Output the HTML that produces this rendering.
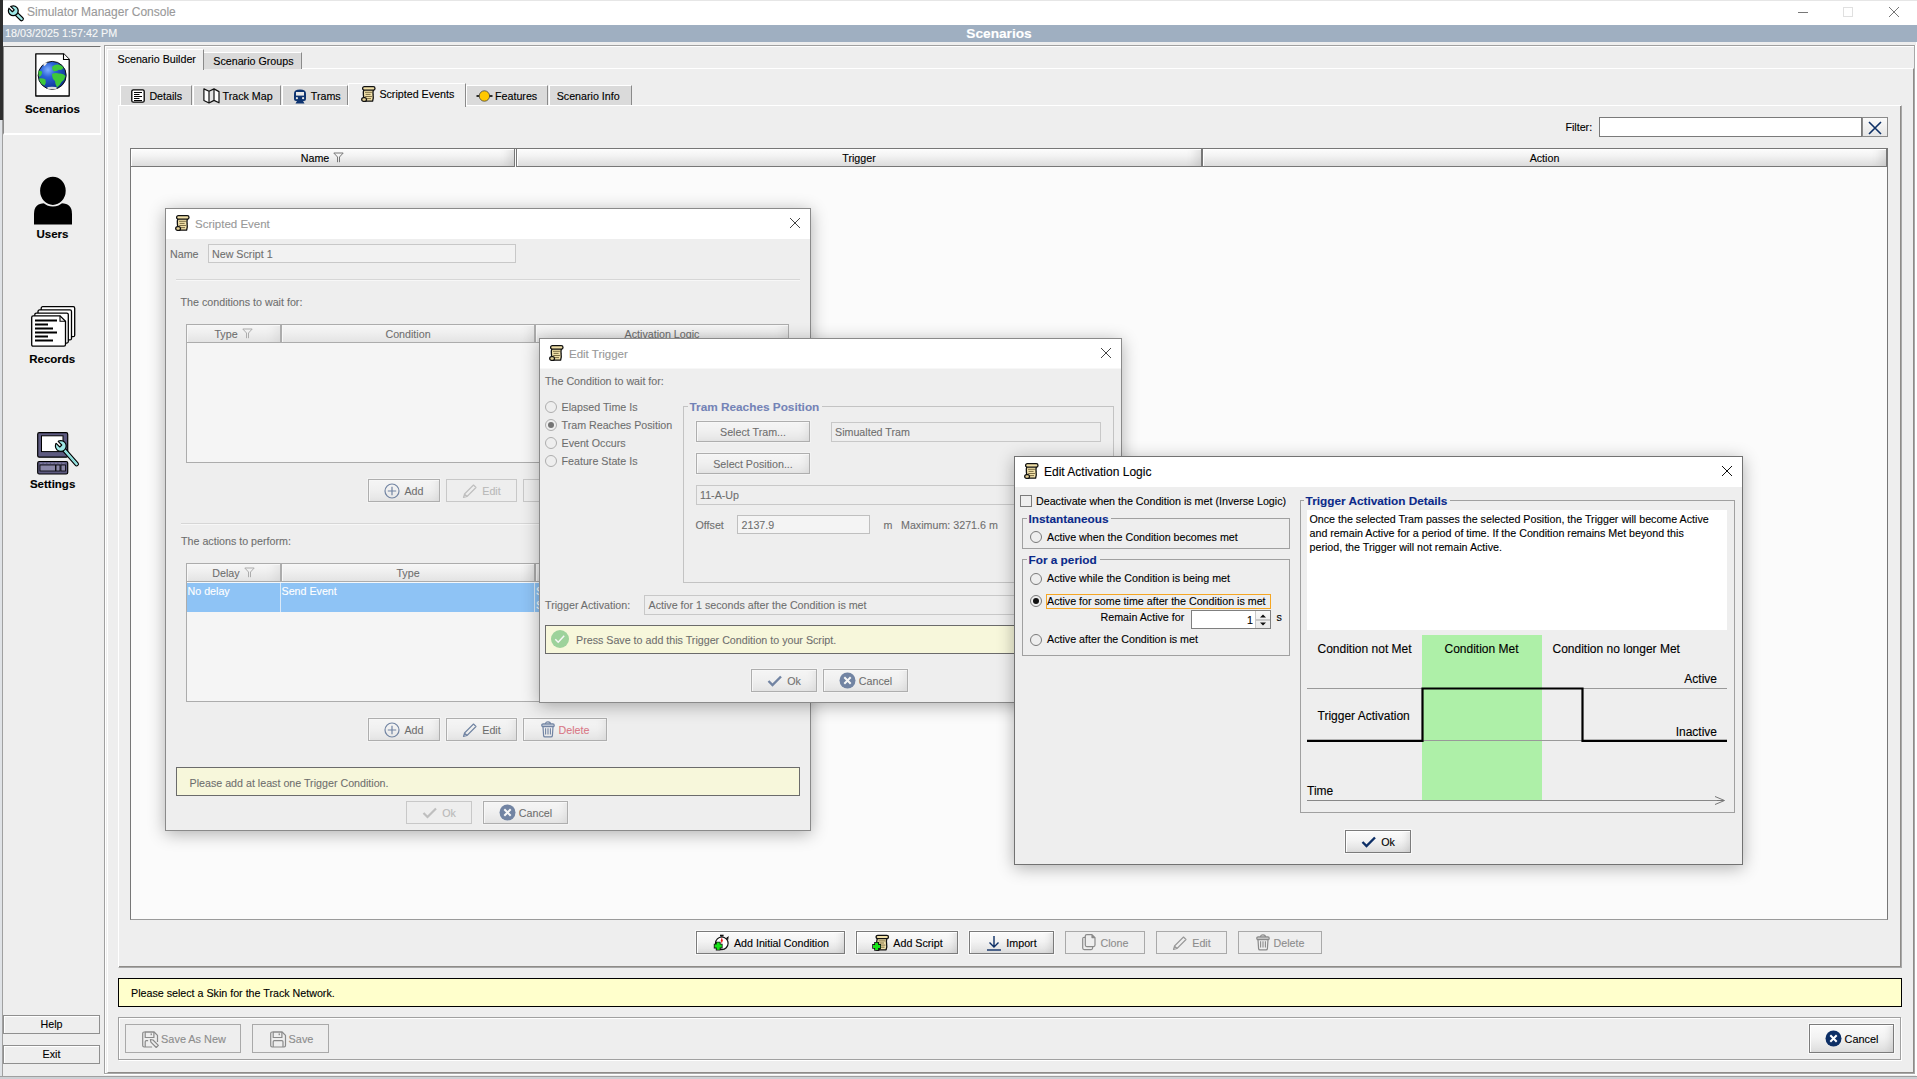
<!DOCTYPE html><html><head><meta charset="utf-8"><title>Simulator Manager Console</title><style>
*{box-sizing:border-box;margin:0;padding:0}
html,body{width:1917px;height:1079px;overflow:hidden}
body{position:relative;background:#eeeeee;font-family:"Liberation Sans",sans-serif;font-size:10.7px;color:#000}
.a{position:absolute}
.t{position:absolute;white-space:nowrap;line-height:20px;-webkit-text-stroke:0.12px currentColor}
.bi span{-webkit-text-stroke:0.12px currentColor}
.btn{display:flex;align-items:center;justify-content:center}
.bi{position:relative;display:flex;align-items:center;white-space:nowrap}
svg{overflow:visible}
</style></head><body>
<div class="a" style="left:0px;top:0px;width:3px;height:120px;background:#2e2e2e;"></div>
<div class="a" style="left:0px;top:120px;width:3px;height:959px;background:#dfe2e6;"></div>
<div class="a" style="left:3px;top:0px;width:1914px;height:1px;background:#e6e6e6;"></div>
<div class="a" style="left:3px;top:1px;width:1914px;height:24px;background:#fff;"></div>
<svg class="a" style="left:5.9px;top:4.4px;" width="18" height="18" viewBox="0 0 18 18"><path d="M7.3 6.8 L15.6 15" stroke="#000" stroke-width="4.6" stroke-linecap="round"/><path d="M7.3 6.8 L15.6 15" stroke="#9ee8e6" stroke-width="2.4" stroke-linecap="round"/><circle cx="7.3" cy="6.8" r="4.9" fill="#9ee8e6" stroke="#000" stroke-width="1.3"/><path d="M8.22 5.88 L2.2 -0.1 L-0.1 2.2 L6.38 7.72 Z" fill="#fff"/><path d="M4.4 2.06 L8.22 5.88 L6.38 7.72 L2.56 3.9" fill="none" stroke="#000" stroke-width="1.2" stroke-linejoin="round"/></svg>
<div class="t" style="left:27px;top:2.34px;font-size:12px;color:#9a9a9a;">Simulator Manager Console</div>
<div class="a" style="left:1798px;top:12px;width:10px;height:1px;background:#777;"></div>
<div class="a" style="left:1843px;top:7px;width:10px;height:10px;border:1px solid #e0e0e0;"></div>
<svg class="a" style="left:1887.5px;top:6.0px;" width="12" height="12" viewBox="0 0 12 12"><path d="M1 1 L11 11 M11 1 L1 11" stroke="#777" stroke-width="1"/></svg>
<div class="a" style="left:3px;top:25px;width:1914px;height:17px;background:#9fafc1;"></div>
<div class="t" style="left:5px;top:23.26px;font-size:10.8px;color:#f7f7f7;">18/03/2025 1:57:42 PM</div>
<div class="t" style="left:699px;width:600px;text-align:center;top:24.25px;font-size:13.7px;color:#fff;font-weight:bold;">Scenarios</div>
<div class="a" style="left:2px;top:120px;width:1px;height:956px;background:#a0a0a0;"></div>
<div class="a" style="left:3px;top:46px;width:98px;height:89px;border-top:1px solid #6f6f6f;border-left:1px solid #8a8a8a;border-right:1px solid #fff;border-bottom:2px solid #fff;background:#eeeeee;"></div>
<svg class="a" style="left:35px;top:53px;" width="36" height="44" viewBox="0 0 36 44"><defs><radialGradient id="gg" cx="0.35" cy="0.3" r="0.75"><stop offset="0" stop-color="#7fb0ff"/><stop offset="0.35" stop-color="#2a62d8"/><stop offset="1" stop-color="#0b2f8a"/></radialGradient></defs><path d="M0.8 0.8 H28.5 L34.2 6.5 V43 H0.8 Z" fill="#fff" stroke="#000" stroke-width="1.3" stroke-linejoin="round"/><path d="M28.5 0.8 V6.5 H34.2" fill="#fff" stroke="#000" stroke-width="1.1"/><circle cx="17.2" cy="22.4" r="14" fill="url(#gg)" stroke="#111" stroke-width="1"/><path d="M17 14 Q19 11 23 11.5 Q27 12 28.5 15 Q26.5 17.5 24 16.8 Q22 18.5 19 18.2 Q17 17 17 14 Z" fill="#3ec83a"/><path d="M17 21 Q20 19.5 24 20.5 Q28.5 20 30.5 23 Q29.5 27 26.5 29 Q24.5 33 22 34.5 Q20 31 20 28 Q17 26 17 21 Z" fill="#3ec83a"/><path d="M4 25.5 Q7 24.5 10.5 26.5 Q11.5 29.5 9.5 32.5 Q6 31.5 5 28.5 Z" fill="#3ec83a"/><path d="M3.5 18 Q5.5 17 7.2 19 Q6.7 23 4.2 24 Q3.2 21 3.5 18 Z" fill="#3ec83a"/><path d="M8 10.5 Q10.5 9.2 12.5 9.6 Q11 12.5 9 13.2 Z" fill="#e8e8e8"/><ellipse cx="17" cy="35" rx="5" ry="1.3" fill="#ddd"/></svg>
<div class="t" style="left:-247.6px;width:600px;text-align:center;top:98.62px;font-size:11.5px;color:#000;font-weight:bold;">Scenarios</div>
<svg class="a" style="left:34px;top:177px;" width="38" height="48" viewBox="0 0 38 48"><path d="M0 47.6 V37 Q0 26.3 10.5 26.3 H27.5 Q38 26.3 38 37 V47.6 Z" fill="#000"/><ellipse cx="18.9" cy="13.8" rx="13.6" ry="14.9" fill="#000" stroke="#eeeeee" stroke-width="1.6"/></svg>
<div class="t" style="left:-247.5px;width:600px;text-align:center;top:223.52px;font-size:11.5px;color:#000;font-weight:bold;">Users</div>
<svg class="a" style="left:31px;top:305.5px;" width="45" height="41" viewBox="0 0 45 41"><rect x="10.2" y="0.7" width="33.5" height="30" rx="1.5" fill="#fff" stroke="#000" stroke-width="1.3"/><rect x="7.0" y="3.9000000000000004" width="33.5" height="30" rx="1.5" fill="#fff" stroke="#000" stroke-width="1.3"/><rect x="3.8" y="7.1000000000000005" width="33.5" height="30" rx="1.5" fill="#fff" stroke="#000" stroke-width="1.3"/><path d="M0.7 11.5 Q0.7 9.8 2.2 9.8 H29 L34.5 15.3 V38.5 Q34.5 40.2 33 40.2 H2.2 Q0.7 40.2 0.7 38.5 Z" fill="#fff" stroke="#000" stroke-width="1.3"/><path d="M29 9.8 V15.3 H34.5" fill="none" stroke="#000" stroke-width="1.1"/><path d="M4 14.5 H26 M4 18.5 H17 M4 22.5 H22 M4 26.5 H26 M4 30.5 H17 M4 34.5 H22" stroke="#000" stroke-width="1.8"/></svg>
<div class="t" style="left:-247.8px;width:600px;text-align:center;top:348.62px;font-size:11.5px;color:#000;font-weight:bold;">Records</div>
<svg class="a" style="left:37px;top:432px;" width="42" height="43" viewBox="0 0 42 43"><rect x="0.7" y="0.7" width="30" height="24.5" rx="1.5" fill="#5d5a80" stroke="#000" stroke-width="1.2"/><rect x="4.5" y="3.8" width="21.5" height="15.8" fill="#fff" stroke="#000" stroke-width="1"/><rect x="0.7" y="29.5" width="30" height="12.5" rx="1.5" fill="#5d5a80" stroke="#000" stroke-width="1.2"/><rect x="3" y="33" width="15.5" height="6" fill="#8a87a8" stroke="#000" stroke-width="0.8"/><rect x="19" y="33" width="4" height="6" fill="#8a87a8" stroke="#000" stroke-width="0.8"/><rect x="24" y="33" width="4.5" height="6" fill="#8a87a8" stroke="#000" stroke-width="0.8"/><path d="M3 31.3 H28" stroke="#8a87a8" stroke-width="0.9" stroke-dasharray="2.5 1.2"/><path d="M23.8 14 L39.6 32" stroke="#000" stroke-width="4.8" stroke-linecap="round"/><path d="M23.8 14 L39.6 32" stroke="#9ee8e6" stroke-width="2.6" stroke-linecap="round"/><path d="M26 17 L38.8 31.2" stroke="#6cc9c6" stroke-width="0.6"/><circle cx="23.8" cy="14" r="5.4" fill="#9ee8e6" stroke="#000" stroke-width="1.2"/><path d="M24.79 13.01 L19.13 7.35 L17.15 9.33 L22.81 14.99 Z" fill="#fff"/><path d="M20.9 9.12 L24.79 13.01 L22.81 14.99 L18.92 11.1" fill="none" stroke="#000" stroke-width="1.1" stroke-linejoin="round"/></svg>
<div class="t" style="left:-247.4px;width:600px;text-align:center;top:473.62px;font-size:11.5px;color:#000;font-weight:bold;">Settings</div>
<div class="a btn" style="left:3px;top:1015px;width:97px;height:19px;border:1px solid #7b7b7b;background:linear-gradient(180deg,#fbfbfb 0%,#f3f3f3 45%,#dedede 100%);box-shadow:inset 1px 1px 0 #fff, inset -8px -2px 8px -6px rgba(0,0,0,0.12), 0 0 0 1px rgba(255,255,255,0.6);background:#eee;border-color:#8f8f8f;box-shadow:inset 1px 1px 0 #fff;"><div class="bi" style="top:-1px"><span style="font-size:10.7px;color:#000;line-height:14px">Help</span></div></div>
<div class="a btn" style="left:3px;top:1045px;width:97px;height:19px;border:1px solid #7b7b7b;background:linear-gradient(180deg,#fbfbfb 0%,#f3f3f3 45%,#dedede 100%);box-shadow:inset 1px 1px 0 #fff, inset -8px -2px 8px -6px rgba(0,0,0,0.12), 0 0 0 1px rgba(255,255,255,0.6);background:#eee;border-color:#8f8f8f;box-shadow:inset 1px 1px 0 #fff;"><div class="bi" style="top:-1px"><span style="font-size:10.7px;color:#000;line-height:14px">Exit</span></div></div>
<div class="a" style="left:104px;top:45px;width:1811px;height:1029px;border:1px solid #a0a0a0;border-right-color:#a8a8a8;border-bottom-color:#a8a8a8;box-shadow:inset 1px 1px 0 #fff;"></div>
<div class="a" style="left:104px;top:1074px;width:1812px;height:1px;background:#fff;"></div>
<div class="a" style="left:1915px;top:45px;width:1px;height:1030px;background:#fff;"></div>
<div class="a" style="left:0px;top:1076px;width:1917px;height:1px;background:#a0a0a0;"></div>
<div class="a" style="left:0px;top:1077px;width:1917px;height:2px;background:#cdd0d4;"></div>
<div class="a" style="left:1916px;top:42px;width:1px;height:1034px;background:#fff;"></div>
<div class="a" style="left:107px;top:68px;width:1807px;height:1005px;border-top:1px solid #fff;border-left:1px solid #fff;border-right:1px solid #8e8b88;border-bottom:1px solid #8e8b88;"></div>
<div class="a" style="left:203px;top:52px;width:99px;height:17px;background:#dadada;border-top:1px solid #fff;border-left:1px solid #fff;border-right:1px solid #8a8a8a;"></div>
<div class="a" style="left:107px;top:49px;width:97px;height:21px;background:#eeeeee;border-top:1px solid #fff;border-left:1px solid #fff;border-right:1px solid #8a8a8a;"></div>
<div class="t" style="left:117.5px;top:48.79px;font-size:10.7px;color:#000;">Scenario Builder</div>
<div class="t" style="left:213.3px;top:51.29px;font-size:10.7px;color:#000;">Scenario Groups</div>
<div class="a" style="left:118px;top:105px;width:1784px;height:863px;border-top:1px solid #fff;border-left:1px solid #fff;border-right:1px solid #a8a8a8;border-bottom:1px solid #a8a8a8;box-shadow:inset -1px -1px 0 #8e8b88;"></div>
<div class="a" style="left:120px;top:85px;width:72px;height:20px;background:#dadada;border-top:1px solid #fff;border-left:1px solid #fff;border-right:1px solid #8a8a8a;"></div>
<div class="a" style="left:193px;top:85px;width:88px;height:20px;background:#dadada;border-top:1px solid #fff;border-left:1px solid #fff;border-right:1px solid #8a8a8a;"></div>
<div class="a" style="left:282px;top:85px;width:66px;height:20px;background:#dadada;border-top:1px solid #fff;border-left:1px solid #fff;border-right:1px solid #8a8a8a;"></div>
<div class="a" style="left:466px;top:85px;width:82px;height:20px;background:#dadada;border-top:1px solid #fff;border-left:1px solid #fff;border-right:1px solid #8a8a8a;"></div>
<div class="a" style="left:549px;top:85px;width:83px;height:20px;background:#dadada;border-top:1px solid #fff;border-left:1px solid #fff;border-right:1px solid #8a8a8a;"></div>
<div class="a" style="left:348px;top:83px;width:118px;height:24px;background:#eeeeee;border-top:1px solid #fff;border-left:1px solid #fff;border-right:1px solid #8a8a8a;"></div>
<svg class="a" style="left:131px;top:89px;" width="14" height="14" viewBox="0 0 14 14"><rect x="0.8" y="0.8" width="12.4" height="12.4" rx="1.5" fill="#fff" stroke="#000" stroke-width="1.3"/><path d="M3 3.5 H11 M3 5.5 H8.5 M3 7.5 H11 M3 9.5 H8.5 M3 11.5 H11" stroke="#000" stroke-width="1"/></svg>
<div class="t" style="left:149.4px;top:86.29px;font-size:10.7px;color:#000;">Details</div>
<svg class="a" style="left:202.5px;top:88px;" width="17" height="16" viewBox="0 0 17 16"><path d="M0.9 0.9 L6 3.3 V15 L0.9 12.5 Z" fill="#fff"/><path d="M6 3.3 L11 0.9 V12.4 L6 15 Z" fill="#e4e4e4"/><path d="M11 0.9 L16 3.6 V14.8 L11 12.4 Z" fill="#fff"/><path d="M0.9 0.9 L6 3.3 L11 0.9 L16 3.6 V14.8 L11 12.4 L6 15 L0.9 12.5 Z M6 3.3 V15 M11 0.9 V12.4" fill="none" stroke="#111" stroke-width="1.2" stroke-linejoin="round"/></svg>
<div class="t" style="left:222.5px;top:86.29px;font-size:10.7px;color:#000;">Track Map</div>
<svg class="a" style="left:292.5px;top:88.5px;" width="14" height="15" viewBox="0 0 14 15"><path d="M1 4.5 Q1 0.6 7 0.6 Q13 0.6 13 4.5 V10 Q13 12 11 12 H3 Q1 12 1 10 Z" fill="#0d3370"/><rect x="3" y="3" width="8" height="3.6" fill="#e8e8e8"/><circle cx="3.9" cy="9.2" r="1.1" fill="#e8e8e8"/><circle cx="10.1" cy="9.2" r="1.1" fill="#e8e8e8"/><path d="M4 12 L2.5 14.6 H11.5 L10 12 Z" fill="#0d3370"/></svg>
<div class="t" style="left:310.8px;top:86.29px;font-size:10.7px;color:#000;">Trams</div>
<svg class="a" style="left:361px;top:86px;" width="15" height="16" viewBox="0 0 15 16"><path d="M3 3 H12.6 Q11.6 6 12.1 9 Q12.7 12 11.6 15.2 H2.6 Q3.1 12 2.4 9 Q2 6 3 3 Z" fill="#f1e0a8" stroke="#111" stroke-width="1.3" stroke-linejoin="round"/><rect x="1.6" y="0.7" width="12.4" height="3.4" rx="1.7" fill="#f1e0a8" stroke="#111" stroke-width="1.3"/><rect x="0.7" y="11.6" width="4.8" height="3.8" rx="1.9" fill="#e6d298" stroke="#111" stroke-width="1.3"/><path d="M4 6.3 H10.9 M4.6 8.4 H9.6 M4.2 10.5 H10.9 M5.8 12.6 H10" stroke="#7d6e45" stroke-width="1"/></svg>
<div class="t" style="left:379.4px;top:83.99px;font-size:10.7px;color:#000;">Scripted Events</div>
<svg class="a" style="left:475.5px;top:89.8px;" width="17" height="12" viewBox="0 0 17 12"><path d="M0.5 6 H16.5" stroke="#000" stroke-width="1.6"/><circle cx="8.4" cy="6" r="5.2" fill="#ffc800" stroke="#444" stroke-width="0.8"/></svg>
<div class="t" style="left:495px;top:86.29px;font-size:10.7px;color:#000;">Features</div>
<div class="t" style="left:556.7px;top:86.29px;font-size:10.7px;color:#000;">Scenario Info</div>
<div class="t" style="left:1565.4px;top:117.29px;font-size:10.7px;color:#000;">Filter:</div>
<div class="a" style="left:1599px;top:117px;width:263px;height:20px;border:1px solid #7a7a7a;background:#fff;"></div>
<div class="a" style="left:1862px;top:117px;width:26px;height:20px;border:1px solid #8a8a8a;background:linear-gradient(#fafafa,#e6e6e6);"></div>
<svg class="a" style="left:1867px;top:119.5px;" width="16" height="16" viewBox="0 0 16 16"><path d="M2 2 L14 14 M14 2 L2 14" stroke="#0d2f66" stroke-width="1.6"/></svg>
<div class="a" style="left:130px;top:148px;width:1758px;height:772px;border:1px solid #777;border-bottom-color:#9a9a9a;background:#fbfbfb;"></div>
<div class="a btn" style="left:130px;top:148px;width:385px;height:19px;border:1px solid #777;background:linear-gradient(180deg,#fdfdfd 0%,#f3f3f3 40%,#dcdcdc 100%);box-shadow:inset 1px 1px 0 #fff, inset -16px 0 12px -12px rgba(0,0,0,0.12);"><div class="bi" style="top:0px"><span style="font-size:10.7px;line-height:14px">Name</span><svg width="11" height="11" viewBox="0 0 11 11" style="display:block;flex:none;margin-left:4px"><path d="M0.8 1 H10.2 L6.5 5 V10.2 M0.8 1 L4.5 5 V10.2" fill="none" stroke="#777" stroke-width="1"/></svg></div></div>
<div class="a btn" style="left:516px;top:148px;width:686px;height:19px;border:1px solid #777;background:linear-gradient(180deg,#fdfdfd 0%,#f3f3f3 40%,#dcdcdc 100%);box-shadow:inset 1px 1px 0 #fff, inset -16px 0 12px -12px rgba(0,0,0,0.12);"><div class="bi" style="top:0px"><span style="font-size:10.7px;line-height:14px">Trigger</span></div></div>
<div class="a btn" style="left:1202px;top:148px;width:685px;height:19px;border:1px solid #777;background:linear-gradient(180deg,#fdfdfd 0%,#f3f3f3 40%,#dcdcdc 100%);box-shadow:inset 1px 1px 0 #fff, inset -16px 0 12px -12px rgba(0,0,0,0.12);"><div class="bi" style="top:0px"><span style="font-size:10.7px;line-height:14px">Action</span></div></div>
<div class="a btn" style="left:696px;top:931px;width:149px;height:23px;border:1px solid #7b7b7b;background:linear-gradient(180deg,#fbfbfb 0%,#f3f3f3 45%,#dedede 100%);box-shadow:inset 1px 1px 0 #fff, inset -8px -2px 8px -6px rgba(0,0,0,0.12), 0 0 0 1px rgba(255,255,255,0.6);"><div class="bi" style="top:0px"><svg width="18" height="18" viewBox="0 0 18 18" style="display:block;flex:none;"><circle cx="9.8" cy="9.3" r="6.3" fill="#fff" stroke="#111" stroke-width="1.2"/><path d="M8 1.6 H11.6" stroke="#111" stroke-width="1.8"/><path d="M9.8 2.4 V3.2" stroke="#111" stroke-width="1.2"/><path d="M14.2 4.6 L16 3.2 L15.6 5.8" fill="none" stroke="#111" stroke-width="1.1"/><path d="M9.8 3.4 L10.8 6.6 L9.8 9.6 L8.8 6.6 Z" fill="#f01010"/><path d="M6.2 7.699999999999999 V16.5 M1.7999999999999998 12.1 H10.600000000000001" stroke="#111" stroke-width="4.8"/><path d="M6.2 8.5 V15.7 M2.6 12.1 H9.8" stroke="#17e317" stroke-width="3"/></svg><span style="display:inline-block;width:4px"></span><span style="font-size:10.7px;color:#000;line-height:14px">Add Initial Condition</span></div></div>
<div class="a btn" style="left:856px;top:931px;width:102px;height:23px;border:1px solid #7b7b7b;background:linear-gradient(180deg,#fbfbfb 0%,#f3f3f3 45%,#dedede 100%);box-shadow:inset 1px 1px 0 #fff, inset -8px -2px 8px -6px rgba(0,0,0,0.12), 0 0 0 1px rgba(255,255,255,0.6);"><div class="bi" style="top:0px"><svg width="18" height="18" viewBox="0 0 18 18" style="display:block;flex:none;"><g transform="translate(3.5,0.6)"><path d="M3 3 H12.6 Q11.6 6 12.1 9 Q12.7 12 11.6 15.2 H2.6 Q3.1 12 2.4 9 Q2 6 3 3 Z" fill="#f1e0a8" stroke="#111" stroke-width="1.3" stroke-linejoin="round"/><rect x="1.6" y="0.7" width="12.4" height="3.4" rx="1.7" fill="#f1e0a8" stroke="#111" stroke-width="1.3"/><rect x="0.7" y="11.6" width="4.8" height="3.8" rx="1.9" fill="#e6d298" stroke="#111" stroke-width="1.3"/><path d="M4 6.3 H10.9 M4.6 8.4 H9.6 M4.2 10.5 H10.9 M5.8 12.6 H10" stroke="#7d6e45" stroke-width="1"/></g><path d="M5.6 8.0 V16.8 M1.1999999999999993 12.4 H10.0" stroke="#111" stroke-width="4.8"/><path d="M5.6 8.8 V16.0 M1.9999999999999996 12.4 H9.2" stroke="#17e317" stroke-width="3"/></svg><span style="display:inline-block;width:4px"></span><span style="font-size:10.7px;color:#000;line-height:14px">Add Script</span></div></div>
<div class="a btn" style="left:969px;top:931px;width:85px;height:23px;border:1px solid #7b7b7b;background:linear-gradient(180deg,#fbfbfb 0%,#f3f3f3 45%,#dedede 100%);box-shadow:inset 1px 1px 0 #fff, inset -8px -2px 8px -6px rgba(0,0,0,0.12), 0 0 0 1px rgba(255,255,255,0.6);"><div class="bi" style="top:0px"><svg width="16" height="16" viewBox="0 0 16 16" style="display:block;flex:none;"><path d="M8 1 V12 M3.5 7.5 L8 12 L12.5 7.5" fill="none" stroke="#0d2f66" stroke-width="1.4"/><path d="M1 15 H15" stroke="#0d2f66" stroke-width="1.4"/></svg><span style="display:inline-block;width:4px"></span><span style="font-size:10.7px;color:#000;line-height:14px">Import</span></div></div>
<div class="a btn" style="left:1065px;top:931px;width:80px;height:23px;border:1px solid #a9a9a9;background:#eeeeee;"><div class="bi" style="top:0px"><svg width="14" height="17" viewBox="0 0 14 17" style="display:block;flex:none;"><path d="M4.8 0.6 H10 L13 3.6 V11.1 Q13 12.6 11.5 12.6 H4.8 Q3.3 12.6 3.3 11.1 V2.1 Q3.3 0.6 4.8 0.6 Z M10 0.6 V3.6 H13" fill="none" stroke="#8a8a8a" stroke-width="1.2" stroke-linejoin="round"/><path d="M3.3 3.3 H2.2 Q0.7 3.3 0.7 4.8 V14.1 Q0.7 15.6 2.2 15.6 H9.1 Q10.6 15.6 10.6 14.1 V12.6" fill="none" stroke="#8a8a8a" stroke-width="1.2"/></svg><span style="display:inline-block;width:5px"></span><span style="font-size:10.7px;color:#8d8d8d;line-height:14px">Clone</span></div></div>
<div class="a btn" style="left:1156px;top:931px;width:71px;height:23px;border:1px solid #a9a9a9;background:#eeeeee;"><div class="bi" style="top:0px"><svg width="16" height="16" viewBox="0 0 16 16" style="display:block;flex:none;"><path d="M1.5 14.5 L2.5 11 L11.5 2 L14 4.5 L5 13.5 Z M2.5 11 L5 13.5" fill="none" stroke="#999" stroke-width="1.1" stroke-linejoin="round"/></svg><span style="display:inline-block;width:4px"></span><span style="font-size:10.7px;color:#8d8d8d;line-height:14px">Edit</span></div></div>
<div class="a btn" style="left:1238px;top:931px;width:84px;height:23px;border:1px solid #a9a9a9;background:#eeeeee;"><div class="bi" style="top:0px"><svg width="14" height="17" viewBox="0 0 14 17" style="display:block;flex:none;"><path d="M4.5 3 Q4.5 0.8 7 0.8 Q9.5 0.8 9.5 3" fill="none" stroke="#8a8a8a" stroke-width="1.2"/><rect x="0.8" y="2.9" width="12.4" height="2.8" rx="1.3" fill="#c4c4c4" stroke="#8a8a8a" stroke-width="1.2"/><path d="M2 5.7 L2.6 14.6 Q2.7 15.9 4 15.9 H10 Q11.3 15.9 11.4 14.6 L12 5.7" fill="none" stroke="#8a8a8a" stroke-width="1.2"/><path d="M4.6 7.3 V13.6 M7 7.3 V13.6 M9.4 7.3 V13.6" stroke="#8a8a8a" stroke-width="1.1"/></svg><span style="display:inline-block;width:4px"></span><span style="font-size:10.7px;color:#8d8d8d;line-height:14px">Delete</span></div></div>
<div class="a" style="left:118px;top:978px;width:1784px;height:29px;border:1px solid #000;background:#ffffcc;"></div>
<div class="t" style="left:131px;top:983.29px;font-size:10.7px;color:#000;">Please select a Skin for the Track Network.</div>
<div class="a" style="left:118px;top:1017px;width:1783px;height:43px;border:1px solid #a0a0a0;box-shadow:inset 1px 1px 0 #fff, 1px 1px 0 #fff;"></div>
<div class="a btn" style="left:125px;top:1024px;width:116px;height:29px;border:1px solid #a9a9a9;background:#eeeeee;"><div class="bi" style="top:0px"><svg width="17" height="17" viewBox="0 0 17 17" style="display:block;flex:none;"><g transform="translate(2.1,1.4)" fill="none" stroke="#8a8a8a" stroke-width="1.2" stroke-linejoin="round"><path d="M10 15.6 H2 Q0.6 15.6 0.6 14.2 V2 Q0.6 0.6 2 0.6 H12 L15.4 4 V10.6"/><rect x="3.1" y="0.6" width="8.7" height="5.5"/><path d="M3.1 15.6 V10.3 Q3.1 9.2 4.2 9.2 H6"/><path d="M8.3 8.1 L10.91 8.59 L16.26 13.94 L14.14 16.06 L8.79 10.71 Z"/><rect x="8.5" y="2" width="1.3" height="1.8" fill="#8a8a8a" stroke="none"/></g></svg><span style="display:inline-block;width:4px"></span><span style="font-size:10.9px;color:#8d8d8d;line-height:14px">Save As New</span></div></div>
<div class="a btn" style="left:252px;top:1024px;width:77px;height:29px;border:1px solid #a9a9a9;background:#eeeeee;"><div class="bi" style="top:0px"><svg width="17" height="17" viewBox="0 0 17 17" style="display:block;flex:none;"><g transform="translate(2.1,1.4)" fill="none" stroke="#8a8a8a" stroke-width="1.2" stroke-linejoin="round"><path d="M2 0.6 H12 L15.4 4 V14.2 Q15.4 15.6 14 15.6 H2 Q0.6 15.6 0.6 14.2 V2 Q0.6 0.6 2 0.6 Z"/><rect x="3.1" y="0.6" width="8.7" height="5.5"/><path d="M3.1 15.6 V10.3 Q3.1 9.2 4.2 9.2 H11.8 Q12.9 9.2 12.9 10.3 V15.6"/><rect x="8.5" y="2" width="1.3" height="1.8" fill="#8a8a8a" stroke="none"/></g></svg><span style="display:inline-block;width:4px"></span><span style="font-size:10.9px;color:#8d8d8d;line-height:14px">Save</span></div></div>
<div class="a btn" style="left:1809px;top:1024px;width:85px;height:29px;border:1px solid #7b7b7b;background:linear-gradient(180deg,#fbfbfb 0%,#f3f3f3 45%,#dedede 100%);box-shadow:inset 1px 1px 0 #fff, inset -8px -2px 8px -6px rgba(0,0,0,0.12), 0 0 0 1px rgba(255,255,255,0.6);"><div class="bi" style="top:0px"><svg width="17" height="17" viewBox="0 0 17 17" style="display:block;flex:none;"><circle cx="8.5" cy="8.5" r="8" fill="#0d2f66"/><path d="M5.3 5.3 L11.7 11.7 M11.7 5.3 L5.3 11.7" stroke="#fff" stroke-width="2"/></svg><span style="display:inline-block;width:3px"></span><span style="font-size:10.9px;color:#000;line-height:14px">Cancel</span></div></div>
<div class="a" style="left:165px;top:208px;width:646px;height:623px;background:#eeeeee;border:1px solid #8a8a8a;box-shadow:0 3px 16px rgba(0,0,0,0.30);"></div>
<div class="a" style="left:166px;top:209px;width:644px;height:30px;background:#fff;"></div>
<svg class="a" style="left:175px;top:215px;" width="15" height="16" viewBox="0 0 15 16"><path d="M3 3 H12.6 Q11.6 6 12.1 9 Q12.7 12 11.6 15.2 H2.6 Q3.1 12 2.4 9 Q2 6 3 3 Z" fill="#f1e0a8" stroke="#111" stroke-width="1.3" stroke-linejoin="round"/><rect x="1.6" y="0.7" width="12.4" height="3.4" rx="1.7" fill="#f1e0a8" stroke="#111" stroke-width="1.3"/><rect x="0.7" y="11.6" width="4.8" height="3.8" rx="1.9" fill="#e6d298" stroke="#111" stroke-width="1.3"/><path d="M4 6.3 H10.9 M4.6 8.4 H9.6 M4.2 10.5 H10.9 M5.8 12.6 H10" stroke="#7d6e45" stroke-width="1"/></svg>
<div class="t" style="left:195px;top:214.22px;font-size:11.5px;color:#999;">Scripted Event</div>
<svg class="a" style="left:789.0px;top:217.0px;" width="12" height="12" viewBox="0 0 12 12"><path d="M1 1 L11 11 M11 1 L1 11" stroke="#444" stroke-width="1"/></svg>
<div class="t" style="left:170px;top:244.29px;font-size:10.7px;color:#000;">Name</div>
<div class="a" style="left:208px;top:244px;width:308px;height:19px;border:1px solid #a9a9a9;background:#f6f6f6;"></div>
<div class="t" style="left:212px;top:244.29px;font-size:10.7px;color:#000;">New Script 1</div>
<div class="a" style="left:176px;top:279px;width:624px;height:2px;border-top:1px solid #c4c4c4;border-bottom:1px solid #fff;"></div>
<div class="t" style="left:180.6px;top:292.29px;font-size:10.7px;color:#000;">The conditions to wait for:</div>
<div class="a" style="left:186px;top:324px;width:603px;height:139px;border:1px solid #777;background:#fbfbfb;"></div>
<div class="a btn" style="left:186px;top:324px;width:95px;height:19px;border:1px solid #777;background:linear-gradient(180deg,#fdfdfd 0%,#f3f3f3 40%,#dcdcdc 100%);box-shadow:inset 1px 1px 0 #fff, inset -16px 0 12px -12px rgba(0,0,0,0.12);"><div class="bi" style="top:0px"><span style="font-size:10.7px;line-height:14px">Type</span><svg width="11" height="11" viewBox="0 0 11 11" style="display:block;flex:none;margin-left:4px"><path d="M0.8 1 H10.2 L6.5 5 V10.2 M0.8 1 L4.5 5 V10.2" fill="none" stroke="#777" stroke-width="1"/></svg></div></div>
<div class="a btn" style="left:281px;top:324px;width:254px;height:19px;border:1px solid #777;background:linear-gradient(180deg,#fdfdfd 0%,#f3f3f3 40%,#dcdcdc 100%);box-shadow:inset 1px 1px 0 #fff, inset -16px 0 12px -12px rgba(0,0,0,0.12);"><div class="bi" style="top:0px"><span style="font-size:10.7px;line-height:14px">Condition</span></div></div>
<div class="a btn" style="left:535px;top:324px;width:254px;height:19px;border:1px solid #777;background:linear-gradient(180deg,#fdfdfd 0%,#f3f3f3 40%,#dcdcdc 100%);box-shadow:inset 1px 1px 0 #fff, inset -16px 0 12px -12px rgba(0,0,0,0.12);"><div class="bi" style="top:0px"><span style="font-size:10.7px;line-height:14px">Activation Logic</span></div></div>
<div class="a btn" style="left:368px;top:479px;width:72px;height:23px;border:1px solid #7b7b7b;background:linear-gradient(180deg,#fbfbfb 0%,#f3f3f3 45%,#dedede 100%);box-shadow:inset 1px 1px 0 #fff, inset -8px -2px 8px -6px rgba(0,0,0,0.12), 0 0 0 1px rgba(255,255,255,0.6);"><div class="bi" style="top:0px"><svg width="16" height="16" viewBox="0 0 16 16" style="display:block;flex:none;"><circle cx="8" cy="8" r="7" fill="none" stroke="#0d2f66" stroke-width="1.2"/><path d="M8 3.8 V12.2 M3.8 8 H12.2" stroke="#0d2f66" stroke-width="1.2"/></svg><span style="display:inline-block;width:4px"></span><span style="font-size:10.7px;color:#000;line-height:14px">Add</span></div></div>
<div class="a btn" style="left:446px;top:479px;width:71px;height:23px;border:1px solid #a9a9a9;background:#eeeeee;"><div class="bi" style="top:0px"><svg width="16" height="16" viewBox="0 0 16 16" style="display:block;flex:none;"><path d="M1.5 14.5 L2.5 11 L11.5 2 L14 4.5 L5 13.5 Z M2.5 11 L5 13.5" fill="none" stroke="#999" stroke-width="1.1" stroke-linejoin="round"/></svg><span style="display:inline-block;width:4px"></span><span style="font-size:10.7px;color:#8d8d8d;line-height:14px">Edit</span></div></div>
<div class="a btn" style="left:523px;top:479px;width:84px;height:23px;border:1px solid #a9a9a9;background:#eeeeee;"><div class="bi" style="top:0px"><svg width="14" height="17" viewBox="0 0 14 17" style="display:block;flex:none;"><path d="M4.5 3 Q4.5 0.8 7 0.8 Q9.5 0.8 9.5 3" fill="none" stroke="#8a8a8a" stroke-width="1.2"/><rect x="0.8" y="2.9" width="12.4" height="2.8" rx="1.3" fill="#c4c4c4" stroke="#8a8a8a" stroke-width="1.2"/><path d="M2 5.7 L2.6 14.6 Q2.7 15.9 4 15.9 H10 Q11.3 15.9 11.4 14.6 L12 5.7" fill="none" stroke="#8a8a8a" stroke-width="1.2"/><path d="M4.6 7.3 V13.6 M7 7.3 V13.6 M9.4 7.3 V13.6" stroke="#8a8a8a" stroke-width="1.1"/></svg><span style="display:inline-block;width:4px"></span><span style="font-size:10.7px;color:#8d8d8d;line-height:14px">Delete</span></div></div>
<div class="a" style="left:181px;top:523px;width:619px;height:2px;border-top:1px solid #c4c4c4;border-bottom:1px solid #fff;"></div>
<div class="t" style="left:181px;top:531.29px;font-size:10.7px;color:#000;">The actions to perform:</div>
<div class="a" style="left:186px;top:563px;width:603px;height:139px;border:1px solid #777;background:#fbfbfb;"></div>
<div class="a btn" style="left:186px;top:563px;width:95px;height:19px;border:1px solid #777;background:linear-gradient(180deg,#fdfdfd 0%,#f3f3f3 40%,#dcdcdc 100%);box-shadow:inset 1px 1px 0 #fff, inset -16px 0 12px -12px rgba(0,0,0,0.12);"><div class="bi" style="top:0px"><span style="font-size:10.7px;line-height:14px">Delay</span><svg width="11" height="11" viewBox="0 0 11 11" style="display:block;flex:none;margin-left:4px"><path d="M0.8 1 H10.2 L6.5 5 V10.2 M0.8 1 L4.5 5 V10.2" fill="none" stroke="#777" stroke-width="1"/></svg></div></div>
<div class="a btn" style="left:281px;top:563px;width:254px;height:19px;border:1px solid #777;background:linear-gradient(180deg,#fdfdfd 0%,#f3f3f3 40%,#dcdcdc 100%);box-shadow:inset 1px 1px 0 #fff, inset -16px 0 12px -12px rgba(0,0,0,0.12);"><div class="bi" style="top:0px"><span style="font-size:10.7px;line-height:14px">Type</span></div></div>
<div class="a btn" style="left:535px;top:563px;width:254px;height:19px;border:1px solid #777;background:linear-gradient(180deg,#fdfdfd 0%,#f3f3f3 40%,#dcdcdc 100%);box-shadow:inset 1px 1px 0 #fff, inset -16px 0 12px -12px rgba(0,0,0,0.12);"><div class="bi" style="top:0px"><span style="font-size:10.7px;line-height:14px">Action</span></div></div>
<div class="a btn" style="left:368px;top:718px;width:72px;height:23px;border:1px solid #7b7b7b;background:linear-gradient(180deg,#fbfbfb 0%,#f3f3f3 45%,#dedede 100%);box-shadow:inset 1px 1px 0 #fff, inset -8px -2px 8px -6px rgba(0,0,0,0.12), 0 0 0 1px rgba(255,255,255,0.6);"><div class="bi" style="top:0px"><svg width="16" height="16" viewBox="0 0 16 16" style="display:block;flex:none;"><circle cx="8" cy="8" r="7" fill="none" stroke="#0d2f66" stroke-width="1.2"/><path d="M8 3.8 V12.2 M3.8 8 H12.2" stroke="#0d2f66" stroke-width="1.2"/></svg><span style="display:inline-block;width:4px"></span><span style="font-size:10.7px;color:#000;line-height:14px">Add</span></div></div>
<div class="a btn" style="left:446px;top:718px;width:71px;height:23px;border:1px solid #7b7b7b;background:linear-gradient(180deg,#fbfbfb 0%,#f3f3f3 45%,#dedede 100%);box-shadow:inset 1px 1px 0 #fff, inset -8px -2px 8px -6px rgba(0,0,0,0.12), 0 0 0 1px rgba(255,255,255,0.6);"><div class="bi" style="top:0px"><svg width="16" height="16" viewBox="0 0 16 16" style="display:block;flex:none;"><path d="M1.5 14.5 L2.5 11 L11.5 2 L14 4.5 L5 13.5 Z M2.5 11 L5 13.5" fill="none" stroke="#0d2f66" stroke-width="1.1" stroke-linejoin="round"/></svg><span style="display:inline-block;width:4px"></span><span style="font-size:10.7px;color:#000;line-height:14px">Edit</span></div></div>
<div class="a btn" style="left:523px;top:718px;width:84px;height:23px;border:1px solid #7b7b7b;background:linear-gradient(180deg,#fbfbfb 0%,#f3f3f3 45%,#dedede 100%);box-shadow:inset 1px 1px 0 #fff, inset -8px -2px 8px -6px rgba(0,0,0,0.12), 0 0 0 1px rgba(255,255,255,0.6);"><div class="bi" style="top:0px"><svg width="14" height="17" viewBox="0 0 14 17" style="display:block;flex:none;"><path d="M4.5 3 Q4.5 0.8 7 0.8 Q9.5 0.8 9.5 3" fill="none" stroke="#0d2f66" stroke-width="1.2"/><rect x="0.8" y="2.9" width="12.4" height="2.8" rx="1.3" fill="#8fa0bd" stroke="#0d2f66" stroke-width="1.2"/><path d="M2 5.7 L2.6 14.6 Q2.7 15.9 4 15.9 H10 Q11.3 15.9 11.4 14.6 L12 5.7" fill="none" stroke="#0d2f66" stroke-width="1.2"/><path d="M4.6 7.3 V13.6 M7 7.3 V13.6 M9.4 7.3 V13.6" stroke="#0d2f66" stroke-width="1.1"/></svg><span style="display:inline-block;width:4px"></span><span style="font-size:10.7px;color:#c8102e;line-height:14px">Delete</span></div></div>
<div class="a" style="left:176px;top:767px;width:624px;height:29px;border:1px solid #000;background:#ffffcc;"></div>
<div class="t" style="left:189.5px;top:772.79px;font-size:10.7px;color:#000;">Please add at least one Trigger Condition.</div>
<div class="a btn" style="left:406px;top:801px;width:66px;height:23px;border:1px solid #a9a9a9;background:#eeeeee;"><div class="bi" style="top:0px"><svg width="16" height="14" viewBox="0 0 16 14" style="display:block;flex:none;"><path d="M1.5 7 L5.5 11 L14 2.5" fill="none" stroke="#999" stroke-width="2.2"/></svg><span style="display:inline-block;width:4px"></span><span style="font-size:10.7px;color:#8d8d8d;line-height:14px">Ok</span></div></div>
<div class="a btn" style="left:483px;top:801px;width:85px;height:23px;border:1px solid #7b7b7b;background:linear-gradient(180deg,#fbfbfb 0%,#f3f3f3 45%,#dedede 100%);box-shadow:inset 1px 1px 0 #fff, inset -8px -2px 8px -6px rgba(0,0,0,0.12), 0 0 0 1px rgba(255,255,255,0.6);"><div class="bi" style="top:0px"><svg width="17" height="17" viewBox="0 0 17 17" style="display:block;flex:none;"><circle cx="8.5" cy="8.5" r="8" fill="#0d2f66"/><path d="M5.3 5.3 L11.7 11.7 M11.7 5.3 L5.3 11.7" stroke="#fff" stroke-width="2"/></svg><span style="display:inline-block;width:3px"></span><span style="font-size:10.7px;color:#000;line-height:14px">Cancel</span></div></div>
<div class="a" style="left:166px;top:239px;width:644px;height:591px;background:rgba(238,238,238,0.45);"></div>
<div class="a" style="left:187px;top:582px;width:601px;height:1px;background:#f4f8fc;"></div>
<div class="a" style="left:187px;top:583px;width:601px;height:29px;background:#8ec3f5;"></div>
<div class="a" style="left:280px;top:583px;width:1px;height:29px;background:#dbe9f7;"></div>
<div class="a" style="left:534px;top:583px;width:1px;height:29px;background:#dbe9f7;"></div>
<div class="t" style="left:187.5px;top:581.29px;font-size:10.7px;color:#fff;">No delay</div>
<div class="t" style="left:281.5px;top:581.29px;font-size:10.7px;color:#fff;">Send Event</div>
<div class="t" style="left:536px;top:581.29px;font-size:10.7px;color:#fff;">Send Event</div>
<div class="t" style="left:536px;top:595.29px;font-size:10.7px;color:#fff;">Scenario</div>
<div class="a" style="left:539px;top:338px;width:583px;height:365px;background:#eeeeee;border:1px solid #8a8a8a;box-shadow:0 3px 16px rgba(0,0,0,0.30);"></div>
<div class="a" style="left:540px;top:339px;width:581px;height:30px;background:#fff;"></div>
<svg class="a" style="left:549px;top:345px;" width="15" height="16" viewBox="0 0 15 16"><path d="M3 3 H12.6 Q11.6 6 12.1 9 Q12.7 12 11.6 15.2 H2.6 Q3.1 12 2.4 9 Q2 6 3 3 Z" fill="#f1e0a8" stroke="#111" stroke-width="1.3" stroke-linejoin="round"/><rect x="1.6" y="0.7" width="12.4" height="3.4" rx="1.7" fill="#f1e0a8" stroke="#111" stroke-width="1.3"/><rect x="0.7" y="11.6" width="4.8" height="3.8" rx="1.9" fill="#e6d298" stroke="#111" stroke-width="1.3"/><path d="M4 6.3 H10.9 M4.6 8.4 H9.6 M4.2 10.5 H10.9 M5.8 12.6 H10" stroke="#7d6e45" stroke-width="1"/></svg>
<div class="t" style="left:569px;top:344.22px;font-size:11.5px;color:#999;">Edit Trigger</div>
<svg class="a" style="left:1100.0px;top:347.0px;" width="12" height="12" viewBox="0 0 12 12"><path d="M1 1 L11 11 M11 1 L1 11" stroke="#444" stroke-width="1"/></svg>
<div class="t" style="left:545px;top:371.29px;font-size:10.7px;color:#000;">The Condition to wait for:</div>
<svg class="a" style="left:544px;top:400px;" width="14" height="14" viewBox="0 0 14 14"><circle cx="7" cy="7" r="5.5" fill="none" stroke="#7a7a7a" stroke-width="1"/></svg>
<div class="t" style="left:561.5px;top:397.09px;font-size:10.7px;color:#000;">Elapsed Time Is</div>
<svg class="a" style="left:544px;top:418px;" width="14" height="14" viewBox="0 0 14 14"><circle cx="7" cy="7" r="5.5" fill="none" stroke="#7a7a7a" stroke-width="1"/><circle cx="7" cy="7" r="3" fill="#111"/></svg>
<div class="t" style="left:561.5px;top:415.09px;font-size:10.7px;color:#000;">Tram Reaches Position</div>
<svg class="a" style="left:544px;top:436px;" width="14" height="14" viewBox="0 0 14 14"><circle cx="7" cy="7" r="5.5" fill="none" stroke="#7a7a7a" stroke-width="1"/></svg>
<div class="t" style="left:561.5px;top:433.09px;font-size:10.7px;color:#000;">Event Occurs</div>
<svg class="a" style="left:544px;top:454px;" width="14" height="14" viewBox="0 0 14 14"><circle cx="7" cy="7" r="5.5" fill="none" stroke="#7a7a7a" stroke-width="1"/></svg>
<div class="t" style="left:561.5px;top:451.09px;font-size:10.7px;color:#000;">Feature State Is</div>
<div class="a" style="left:683px;top:406px;width:431px;height:177px;border:1px solid #a0a0a0;"></div>
<div class="t" style="left:687.5px;top:396.91px;font-size:11.8px;color:#0b2a8a;font-weight:bold;background:#eeeeee;padding:0 3px 0 2px">Tram Reaches Position</div>
<div class="a btn" style="left:696px;top:421px;width:114px;height:21px;border:1px solid #7b7b7b;background:linear-gradient(180deg,#fbfbfb 0%,#f3f3f3 45%,#dedede 100%);box-shadow:inset 1px 1px 0 #fff, inset -8px -2px 8px -6px rgba(0,0,0,0.12), 0 0 0 1px rgba(255,255,255,0.6);"><div class="bi" style="top:0px"><span style="font-size:10.7px;color:#000;line-height:14px">Select Tram...</span></div></div>
<div class="a" style="left:831px;top:422px;width:270px;height:20px;border:1px solid #a9a9a9;background:#eeeeee;"></div>
<div class="t" style="left:835px;top:422.29px;font-size:10.7px;color:#000;">Simualted Tram</div>
<div class="a btn" style="left:696px;top:453px;width:114px;height:21px;border:1px solid #7b7b7b;background:linear-gradient(180deg,#fbfbfb 0%,#f3f3f3 45%,#dedede 100%);box-shadow:inset 1px 1px 0 #fff, inset -8px -2px 8px -6px rgba(0,0,0,0.12), 0 0 0 1px rgba(255,255,255,0.6);"><div class="bi" style="top:0px"><span style="font-size:10.7px;color:#000;line-height:14px">Select Position...</span></div></div>
<div class="a" style="left:696px;top:485px;width:405px;height:20px;border:1px solid #a9a9a9;background:#eeeeee;"></div>
<div class="t" style="left:700px;top:485.29px;font-size:10.7px;color:#000;">11-A-Up</div>
<div class="t" style="left:695.5px;top:515.29px;font-size:10.7px;color:#000;">Offset</div>
<div class="a" style="left:737px;top:515px;width:133px;height:19px;border:1px solid #9a9a9a;background:#fafafa;"></div>
<div class="t" style="left:741.5px;top:515.29px;font-size:10.7px;color:#000;">2137.9</div>
<div class="t" style="left:883.5px;top:515.29px;font-size:10.7px;color:#000;">m</div>
<div class="t" style="left:901px;top:515.29px;font-size:10.7px;color:#000;">Maximum: 3271.6 m</div>
<div class="t" style="left:545px;top:595.29px;font-size:10.7px;color:#000;">Trigger Activation:</div>
<div class="a" style="left:644px;top:595px;width:470px;height:20px;border:1px solid #a9a9a9;background:#eeeeee;"></div>
<div class="t" style="left:648.5px;top:595.29px;font-size:10.7px;color:#000;">Active for 1 seconds after the Condition is met</div>
<div class="a" style="left:545px;top:625px;width:569px;height:29px;border:1px solid #000;background:#ffffcc;"></div>
<svg class="a" style="left:551px;top:630px;" width="18" height="18" viewBox="0 0 18 18"><circle cx="9" cy="9" r="9" fill="#5cbc58"/><path d="M4.3 9.3 L7.2 12.2 L13.2 5.8" fill="none" stroke="#fff" stroke-width="1.5"/></svg>
<div class="t" style="left:576px;top:630.29px;font-size:10.7px;color:#000;">Press Save to add this Trigger Condition to your Script.</div>
<div class="a btn" style="left:751px;top:669px;width:66px;height:23px;border:1px solid #7b7b7b;background:linear-gradient(180deg,#fbfbfb 0%,#f3f3f3 45%,#dedede 100%);box-shadow:inset 1px 1px 0 #fff, inset -8px -2px 8px -6px rgba(0,0,0,0.12), 0 0 0 1px rgba(255,255,255,0.6);"><div class="bi" style="top:0px"><svg width="16" height="14" viewBox="0 0 16 14" style="display:block;flex:none;"><path d="M1.5 7 L5.5 11 L14 2.5" fill="none" stroke="#0d2f66" stroke-width="2.4"/></svg><span style="display:inline-block;width:4px"></span><span style="font-size:10.7px;color:#000;line-height:14px">Ok</span></div></div>
<div class="a btn" style="left:823px;top:669px;width:85px;height:23px;border:1px solid #7b7b7b;background:linear-gradient(180deg,#fbfbfb 0%,#f3f3f3 45%,#dedede 100%);box-shadow:inset 1px 1px 0 #fff, inset -8px -2px 8px -6px rgba(0,0,0,0.12), 0 0 0 1px rgba(255,255,255,0.6);"><div class="bi" style="top:0px"><svg width="17" height="17" viewBox="0 0 17 17" style="display:block;flex:none;"><circle cx="8.5" cy="8.5" r="8" fill="#0d2f66"/><path d="M5.3 5.3 L11.7 11.7 M11.7 5.3 L5.3 11.7" stroke="#fff" stroke-width="2"/></svg><span style="display:inline-block;width:3px"></span><span style="font-size:10.7px;color:#000;line-height:14px">Cancel</span></div></div>
<div class="a" style="left:540px;top:368px;width:581px;height:334px;background:rgba(238,238,238,0.45);"></div>
<div class="a" style="left:1014px;top:456px;width:729px;height:409px;background:#eeeeee;border:1px solid #727272;box-shadow:0 3px 16px rgba(0,0,0,0.30);"></div>
<div class="a" style="left:1015px;top:457px;width:727px;height:30px;background:#fff;"></div>
<svg class="a" style="left:1024px;top:463px;" width="15" height="16" viewBox="0 0 15 16"><path d="M3 3 H12.6 Q11.6 6 12.1 9 Q12.7 12 11.6 15.2 H2.6 Q3.1 12 2.4 9 Q2 6 3 3 Z" fill="#f1e0a8" stroke="#111" stroke-width="1.3" stroke-linejoin="round"/><rect x="1.6" y="0.7" width="12.4" height="3.4" rx="1.7" fill="#f1e0a8" stroke="#111" stroke-width="1.3"/><rect x="0.7" y="11.6" width="4.8" height="3.8" rx="1.9" fill="#e6d298" stroke="#111" stroke-width="1.3"/><path d="M4 6.3 H10.9 M4.6 8.4 H9.6 M4.2 10.5 H10.9 M5.8 12.6 H10" stroke="#7d6e45" stroke-width="1"/></svg>
<div class="t" style="left:1044px;top:462.04px;font-size:12px;color:#000;">Edit Activation Logic</div>
<svg class="a" style="left:1721.0px;top:465.0px;" width="12" height="12" viewBox="0 0 12 12"><path d="M1 1 L11 11 M11 1 L1 11" stroke="#111" stroke-width="1"/></svg>
<div class="a" style="left:1020px;top:495px;width:12px;height:12px;border:1px solid #7a7a7a;"></div>
<div class="t" style="left:1036px;top:491.09px;font-size:10.7px;color:#000;">Deactivate when the Condition is met (Inverse Logic)</div>
<div class="a" style="left:1022px;top:518px;width:268px;height:31px;border:1px solid #a0a0a0;"></div>
<div class="t" style="left:1026.5px;top:508.91px;font-size:11.8px;color:#0b2a8a;font-weight:bold;background:#eeeeee;padding:0 3px 0 2px">Instantaneous</div>
<svg class="a" style="left:1029px;top:530px;" width="14" height="14" viewBox="0 0 14 14"><circle cx="7" cy="7" r="5.5" fill="none" stroke="#7a7a7a" stroke-width="1"/></svg>
<div class="t" style="left:1047px;top:527.29px;font-size:10.7px;color:#000;">Active when the Condition becomes met</div>
<div class="a" style="left:1022px;top:559px;width:268px;height:97px;border:1px solid #a0a0a0;"></div>
<div class="t" style="left:1026.5px;top:549.71px;font-size:11.8px;color:#0b2a8a;font-weight:bold;background:#eeeeee;padding:0 3px 0 2px">For a period</div>
<svg class="a" style="left:1029px;top:571.5px;" width="14" height="14" viewBox="0 0 14 14"><circle cx="7" cy="7" r="5.5" fill="none" stroke="#7a7a7a" stroke-width="1"/></svg>
<div class="t" style="left:1047px;top:567.89px;font-size:10.7px;color:#000;">Active while the Condition is being met</div>
<svg class="a" style="left:1029px;top:594px;" width="14" height="14" viewBox="0 0 14 14"><circle cx="7" cy="7" r="5.5" fill="none" stroke="#7a7a7a" stroke-width="1"/><circle cx="7" cy="7" r="3" fill="#111"/></svg>
<div class="a" style="left:1046px;top:594px;width:225px;height:15px;border:1px solid #f5a623;"></div>
<div class="t" style="left:1047px;top:590.79px;font-size:10.7px;color:#000;">Active for some time after the Condition is met</div>
<div class="t" style="left:1100.5px;top:606.89px;font-size:10.7px;color:#000;">Remain Active for</div>
<div class="a" style="left:1191px;top:610px;width:80px;height:19px;border:1px solid #7f7f7f;background:#fff;"></div>
<div class="a" style="left:1255px;top:611px;width:15px;height:17px;border-left:1px solid #c8c8c8;background:linear-gradient(#fafafa,#e8e8e8);"></div>
<div class="a" style="left:1256px;top:619px;width:14px;height:2px;background:#c8c8c8;"></div>
<svg class="a" style="left:1259px;top:613px;" width="8" height="14" viewBox="0 0 8 14"><path d="M1 4.5 L4 1.5 L7 4.5 Z M1 9.5 L4 12.5 L7 9.5 Z" fill="#111"/></svg>
<div class="t" style="left:653px;width:600px;text-align:right;top:610.29px;font-size:10.7px;color:#000;">1</div>
<div class="t" style="left:1276.5px;top:607.29px;font-size:10.7px;color:#000;">s</div>
<svg class="a" style="left:1029px;top:632.5px;" width="14" height="14" viewBox="0 0 14 14"><circle cx="7" cy="7" r="5.5" fill="none" stroke="#7a7a7a" stroke-width="1"/></svg>
<div class="t" style="left:1047px;top:628.89px;font-size:10.7px;color:#000;">Active after the Condition is met</div>
<div class="a" style="left:1300px;top:500px;width:435px;height:313px;border:1px solid #a0a0a0;"></div>
<div class="t" style="left:1303.6px;top:491.41px;font-size:11.8px;color:#0b2a8a;font-weight:bold;background:#eeeeee;padding:0 3px 0 2px">Trigger Activation Details</div>
<div class="a" style="left:1307px;top:510px;width:420px;height:120px;background:#fff;"></div>
<div class="t" style="left:1309.5px;top:508.89px;font-size:10.7px;color:#000;">Once the selected Tram passes the selected Position, the Trigger will become Active</div>
<div class="t" style="left:1309.5px;top:522.89px;font-size:10.7px;color:#000;">and remain Active for a period of time. If the Condition remains Met beyond this</div>
<div class="t" style="left:1309.5px;top:536.89px;font-size:10.7px;color:#000;">period, the Trigger will not remain Active.</div>
<div class="a" style="left:1422px;top:635px;width:120px;height:165px;background:#aef0a8;"></div>
<div class="t" style="left:1317.5px;top:638.84px;font-size:12px;color:#000;">Condition not Met</div>
<div class="t" style="left:1444.5px;top:638.84px;font-size:12px;color:#000;">Condition Met</div>
<div class="t" style="left:1552.5px;top:638.84px;font-size:12px;color:#000;">Condition no longer Met</div>
<div class="t" style="left:1117px;width:600px;text-align:right;top:668.84px;font-size:12px;color:#000;">Active</div>
<div class="a" style="left:1307px;top:688px;width:420px;height:1px;background:#999;"></div>
<div class="a" style="left:1307px;top:740px;width:420px;height:1px;background:#999;"></div>
<svg class="a" style="left:1306px;top:686px;" width="422" height="57" viewBox="0 0 422 57"><path d="M1 54.8 H116.5 V2.5 H276.5 V54.8 H421" fill="none" stroke="#000" stroke-width="2.2" stroke-linejoin="miter"/></svg>
<div class="t" style="left:1317.5px;top:705.84px;font-size:12px;color:#000;">Trigger Activation</div>
<div class="t" style="left:1117px;width:600px;text-align:right;top:721.84px;font-size:12px;color:#000;">Inactive</div>
<div class="t" style="left:1307px;top:780.84px;font-size:12px;color:#000;">Time</div>
<div class="a" style="left:1307px;top:800px;width:417px;height:1px;background:#888;"></div>
<svg class="a" style="left:1714px;top:795px;" width="12" height="11" viewBox="0 0 12 11"><path d="M1 1.5 L10.5 5.5 L1 9.5 M3 5.5 H10" fill="none" stroke="#777" stroke-width="1"/></svg>
<div class="a btn" style="left:1345px;top:830px;width:66px;height:23px;border:1px solid #7b7b7b;background:linear-gradient(180deg,#fbfbfb 0%,#f3f3f3 45%,#dedede 100%);box-shadow:inset 1px 1px 0 #fff, inset -8px -2px 8px -6px rgba(0,0,0,0.12), 0 0 0 1px rgba(255,255,255,0.6);"><div class="bi" style="top:0px"><svg width="16" height="14" viewBox="0 0 16 14" style="display:block;flex:none;"><path d="M1.5 7 L5.5 11 L14 2.5" fill="none" stroke="#0d2f66" stroke-width="2.4"/></svg><span style="display:inline-block;width:4px"></span><span style="font-size:10.7px;color:#000;line-height:14px">Ok</span></div></div>
</body></html>
